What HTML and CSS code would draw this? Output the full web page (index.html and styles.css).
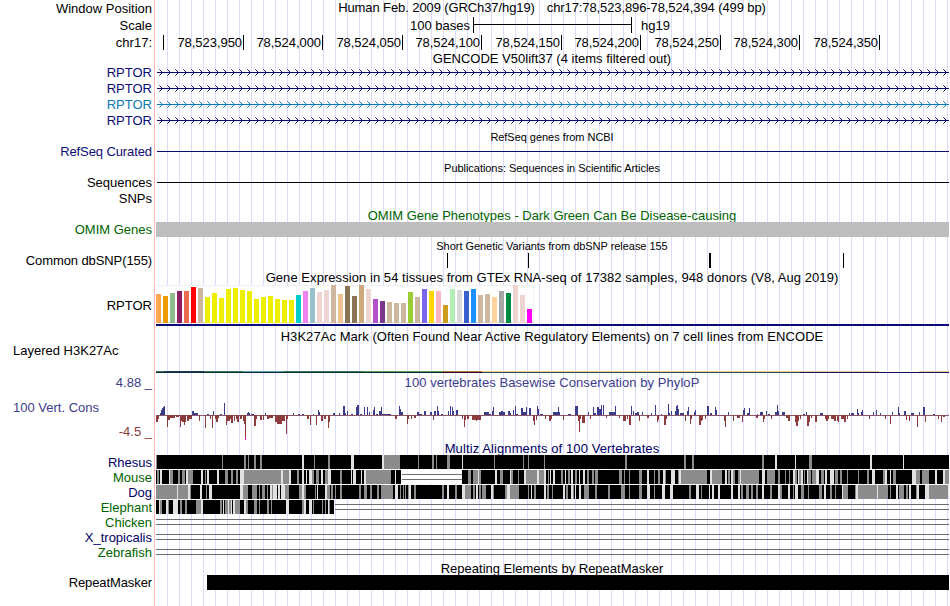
FILE: index.html
```html
<!DOCTYPE html>
<html lang="en">

<head>
  <meta charset="utf-8">
  <title>RPTOR chr17:78,523,896-78,524,394</title>
  <link rel="stylesheet" href="styles.css">
</head>

<body>
  <div class="browser">
    <div class="row h16">
      <span class="label">Window Position</span>
      <span class="title position"><span>Human Feb. 2009 (GRCh37/hg19)</span><span>chr17:78,523,896-78,524,394 (499 bp)</span></span>
    </div>
    <div class="row h17">
      <span class="label down">Scale</span>
      <div class="scale"><span class="down">100 bases</span><i class="scale-bar"></i><span class="down">hg19</span></div>
    </div>
    <div class="row h18">
      <span class="label">chr17:</span>
      <div class="ruler" id="ruler"></div>
    </div>

    <div class="row h13"><span class="title down">GENCODE V50lift37 (4 items filtered out)</span></div>
    <div class="row h16 navy"><span class="label">RPTOR</span><svg class="track gene" height="16"></svg></div>
    <div class="row h16 navy"><span class="label">RPTOR</span><svg class="track gene" height="16"></svg></div>
    <div class="row h16 teal"><span class="label">RPTOR</span><svg class="track gene" height="16"></svg></div>
    <div class="row h16 navy"><span class="label">RPTOR</span><svg class="track gene" height="16"></svg></div>

    <div class="row h16"><span class="title small down">RefSeq genes from NCBI</span></div>
    <div class="row h15 navy"><span class="label tight">RefSeq Curated</span><i class="thin-line"></i></div>
    <div class="row h16"><span class="title small down">Publications: Sequences in Scientific Articles</span></div>
    <div class="row h15"><span class="label">Sequences</span><i class="thin-line"></i></div>
    <div class="row h17"><span class="label">SNPs</span></div>

    <div class="row h15 green"><span class="title down">OMIM Gene Phenotypes - Dark Green Can Be Disease-causing</span></div>
    <div class="row h15 green"><span class="label">OMIM Genes</span><i class="block omim"></i></div>

    <div class="row h16"><span class="title small down">Short Genetic Variants from dbSNP release 155</span></div>
    <div class="row h15"><span class="label tight">Common dbSNP(155)</span><svg class="track" id="snps" height="15"></svg></div>

    <div class="row h17"><span class="title wide down">Gene Expression in 54 tissues from GTEx RNA-seq of 17382 samples, 948 donors (V8, Aug 2019)</span></div>
    <div class="row gtex-row"><span class="label">RPTOR</span><svg class="track" id="gtex" height="41"></svg></div>

    <div class="row h20"><span class="title wide">H3K27Ac Mark (Often Found Near Active Regulatory Elements) on 7 cell lines from ENCODE</span></div>
    <div class="row h3k-row"><span class="label left">Layered H3K27Ac</span><svg class="track" id="h3k" height="29"></svg></div>

    <div class="row cons-row">
      <div class="cons-label blue">
        <span>4.88 _</span>
        <span class="cons-name">100 Vert. Cons</span>
        <span class="red">-4.5 _</span>
      </div>
      <div class="cons-track">
        <span class="title wide blue">100 vertebrates Basewise Conservation by PhyloP</span>
        <svg class="track" id="phylop" height="50"></svg>
      </div>
    </div>

    <div class="row h13 darkblue"><span class="title wider">Multiz Alignments of 100 Vertebrates</span></div>
    <div class="row h15 darkblue"><span class="label">Rhesus</span><svg class="track align" data-species="rhesus" height="15"></svg></div>
    <div class="row h15 green"><span class="label">Mouse</span><svg class="track align" data-species="mouse" height="15"></svg></div>
    <div class="row h15 darkblue"><span class="label">Dog</span><svg class="track align" data-species="dog" height="15"></svg></div>
    <div class="row h15 green"><span class="label">Elephant</span><svg class="track align" data-species="elephant" height="15"></svg></div>
    <div class="row h15 green"><span class="label">Chicken</span><svg class="track align" data-species="chicken" height="15"></svg></div>
    <div class="row h15 darkblue"><span class="label">X_tropicalis</span><svg class="track align" data-species="xenopus" height="15"></svg></div>
    <div class="row h15 green"><span class="label">Zebrafish</span><svg class="track align" data-species="zebrafish" height="15"></svg></div>

    <div class="row h15"><span class="title down">Repeating Elements by RepeatMasker</span></div>
    <div class="row h15"><span class="label tight">RepeatMasker</span><i class="block repeat"></i></div>
  </div>

  <script src="tracks.js"></script>
</body>

</html>
```
FILE: styles.css
```css
body {
  margin: 0;
  background: #fff;
  font-family: "Liberation Sans", Arial, sans-serif;
  font-size: 13px;
  line-height: 15px;
  color: #000;
}

.browser {
  width: 949px;
  height: 606px;
  overflow: hidden;
  background:
    linear-gradient(#ffb4b4, #ffb4b4) 154px 0 / 1px 100% no-repeat,
    repeating-linear-gradient(to right, #dcdcf8 0, #dcdcf8 1px, transparent 1px, transparent 12px) 167px 0 no-repeat;
}

.row {
  display: flex;
  align-items: center;
  white-space: nowrap;
}

.h13 { height: 13px; }
.h15 { height: 15px; }
.h16 { height: 16px; }
.h17 { height: 17px; }
.h18 { height: 18px; }
.h20 { height: 20px; }

.label {
  flex: none;
  box-sizing: border-box;
  width: 155px;
  padding-right: 3px;
  text-align: right;
}

.label.left {
  margin-top: -3px;
  padding-left: 13px;
  text-align: left;
}

.title {
  flex: 1;
  text-align: center;
}

.row > .title:first-child {
  margin-left: 155px;
}

.small {
  font-size: 11px;
  letter-spacing: -0.04px;
}

.down { padding-top: 2px; }
.tight { letter-spacing: -0.1px; }
.wide { letter-spacing: 0.06px; }
.wider { letter-spacing: 0.1px; }

.position {
  display: flex;
  justify-content: center;
  gap: 12px;
  padding-bottom: 2px;
  letter-spacing: -0.1px;
}

.navy { color: #0c0c78; }
.teal { color: #0c78b4; }
.green { color: #006400; }
.blue { color: #3c3c8c; }
.darkblue { color: #000064; }
.red { color: #8c3c3c; }

.scale {
  display: flex;
  align-items: center;
  padding-left: 255px;
}

.scale-bar {
  width: 157px;
  height: 16px;
  margin: 1px 9px 0 3px;
  border-left: 1px solid #000;
  border-right: 1px solid #000;
  background: linear-gradient(#000, #000) 0 7px / 100% 1px no-repeat;
}

.ruler {
  display: flex;
  padding-left: 8px;
}

.ruler span {
  box-sizing: border-box;
  height: 15px;
  padding-right: 1px;
  border-right: 1px solid #000;
  text-align: right;
  letter-spacing: -0.05px;
}

.track {
  flex: none;
  display: block;
  width: 794px;
  shape-rendering: crispEdges;
}

.thin-line {
  flex: 1;
  height: 1px;
  margin-left: 2px;
  background: currentColor;
}

.block {
  flex: 1;
  height: 15px;
  background: #000;
}

.omim {
  margin-left: 1px;
  background: #bebebe;
}

.repeat {
  margin-left: 52px;
}

.gtex-row {
  height: 41px;
}

.h3k-row {
  height: 29px;
  align-items: flex-start;
}

.cons-row {
  height: 67px;
  align-items: flex-start;
}

.cons-label {
  flex: none;
  display: flex;
  flex-direction: column;
  justify-content: space-between;
  box-sizing: border-box;
  width: 155px;
  height: 64px;
  padding-right: 3px;
  text-align: right;
}

.cons-name {
  padding-left: 13px;
  text-align: left;
}

.cons-track {
  display: flex;
  flex-direction: column;
}
```
FILE: tracks.js
```js
const SVG_NS = 'http://www.w3.org/2000/svg';
const LEFT = 155;
const RIGHT = 949;

document.querySelectorAll('.track').forEach(svg => {
  svg.setAttribute('viewBox', `${LEFT} 0 ${RIGHT - LEFT} ${svg.getAttribute('height')}`);
});

function rect(svg, x, y, w, h, fill, opacity = 1) {
  const r = document.createElementNS(SVG_NS, 'rect');
  r.setAttribute('x', x);
  r.setAttribute('y', y);
  r.setAttribute('width', w);
  r.setAttribute('height', h);
  r.setAttribute('fill', fill);
  if (opacity < 1) r.setAttribute('opacity', opacity);
  svg.appendChild(r);
}

// ruler
const ruler = document.getElementById('ruler');
let last = 162;
[163, 243, 322, 402, 481, 561, 640, 720, 799, 879].forEach((x, i) => {
  const tick = document.createElement('span');
  tick.style.width = (i ? x - last : 1) + 'px';
  if (i) tick.textContent = (78523900 + i * 50).toLocaleString('en-US');
  else tick.style.padding = 0;
  ruler.appendChild(tick);
  last = x;
});

// intron lines with strand arrows
document.querySelectorAll('.gene').forEach(svg => {
  rect(svg, 157, 8, 792, 1, 'currentColor');
  for (let tip = 162; tip < RIGHT; tip += 8) {
    for (let k = 1; k <= 3; k++) {
      rect(svg, tip - k, 8 - k, 1, 1, 'currentColor', k === 3 ? 0.6 : 1);
      rect(svg, tip - k, 8 + k, 1, 1, 'currentColor', k === 3 ? 0.6 : 1);
    }
  }
});

// dbSNP
[[447, 1], [528, 1], [709, 2], [843, 1]].forEach(([x, w]) => {
  rect(document.getElementById('snps'), x, 0, w, 15, '#000');
});

// GTEx: bar height, colour
const gtex = document.getElementById('gtex');
const tissues = `29 ffa54f,27 ee9a00,30 8fbc8f,32 8b1c62,32 ee6a50,36 ff0000,35 cdb79e,26 eeee00,30 eeee00,
25 eeee00,34 eeee00,35 eeee00,33 eeee00,32 eeee00,24 eeee00,26 eeee00,27 eeee00,24 eeee00,23 eeee00,23 eeee00,
28 00cdcd,32 ee82ee,35 9ac0cd,31 eed5d2,33 eed5d2,38 cdb79e,29 eec591,37 8b7355,27 8b7355,38 cdaa7d,
34 eed5d2,24 b452cd,22 7a378b,21 cdb79e,20 cdb79e,20 cdb79e,31 9acd32,26 cdb79e,34 7a67ee,32 ffd700,
32 ffb6c1,18 cd9b1d,34 b4eeb4,33 d9d9d9,32 3a5fcd,34 1e90ff,28 cdb79e,29 cdb79e,26 ffd39b,32 a6a6a6,
30 008b45,38 eed5d2,28 eed5d2,14 ff00ff`.split(/,\s*/);
rect(gtex, 156, 0, 378, 38, '#f0f0f0');
rect(gtex, 156, 1, 377, 36, '#fff');
rect(gtex, 156, 37, 378, 1, '#dcdcdc');
tissues.forEach((t, i) => {
  const [h, color] = t.split(' ');
  rect(gtex, 156 + i * 7, 38 - h, 5, h, '#' + color);
});
rect(gtex, 156, 39, 793, 2, '#0c0c78');

// layered H3K27Ac signal
const h3k = document.getElementById('h3k');
[[156, 8, '#2f7f5f'], [164, 40, '#1c3c64'], [204, 39, '#2f7f5f'], [243, 40, '#4fa0b4'], [283, 80, '#2f8058'],
 [363, 79, '#4f9f50'], [442, 40, '#b47846'], [482, 397, '#ebc882'], [879, 40, '#ffffff'], [919, 30, '#ebc882']
].forEach(([x, w, c]) => rect(h3k, x, 25, w, 1, c));
[[156, 286, '#142832'], [442, 40, '#280a1e'], [482, 318, '#325050'], [800, 149, '#141464']
].forEach(([x, w, c]) => rect(h3k, x, 26, w, 1, c));

// phyloP: x, width, signed height
const phylop = document.getElementById('phylop');
const scores = `156 2 -6,158 1 -3,160 1 2,161 1 5,162 1 7,163 1 8,164 1 9,167 1 -11,168 2 -4,170 5 -2,176 3 -1,180 1 -11,
181 1 -5,182 2 -6,184 1 -9,185 1 -6,187 2 -5,189 3 -3,192 2 4,194 4 2,199 1 -5,205 1 -12,207 2 1,210 1 -3,212 1 -12,
213 1 4,215 1 -3,216 2 -6,218 1 -2,220 2 1,224 1 12,226 1 -9,227 3 -5,230 1 -3,231 2 -7,234 1 -5,236 1 -3,237 2 -6,
240 2 -3,243 1 -5,244 1 -8,245 1 -24,247 3 2,248 1 3,251 3 1,254 2 -10,256 1 -3,260 2 -4,263 1 -4,265 1 2,267 2 -3,
269 4 -2,275 2 -6,277 5 -8,282 3 -5,286 1 -18,287 1 -3,293 1 2,298 2 1,302 2 1,307 2 -3,310 1 -9,313 1 1,316 1 -9,
318 1 5,319 1 3,321 2 -5,324 2 -3,328 1 -12,329 1 -6,333 2 2,339 1 2,343 2 9,345 1 2,347 1 4,351 2 1,356 1 8,
357 2 10,360 2 1,364 1 8,367 1 8,369 1 3,373 1 5,374 1 8,376 2 1,379 2 4,381 1 8,382 9 1,395 2 -3,399 1 9,400 1 6,
401 2 3,407 1 -8,408 1 -3,411 1 -3,414 2 -2,417 2 3,419 3 1,424 2 4,430 2 3,433 1 -4,434 2 4,437 1 9,438 1 4,441 2 1,
448 1 4,450 1 9,452 1 8,453 1 4,456 2 5,462 1 -3,464 1 -11,465 1 -4,467 2 -3,472 9 -4,476 1 -5,484 5 3,489 2 1,
492 1 4,493 1 8,499 6 3,501 2 4,508 2 4,510 1 2,513 1 5,515 1 9,516 2 1,521 2 7,523 4 3,526 1 8,529 2 7,533 1 -5,
534 1 -9,536 1 -4,537 1 9,538 1 6,540 3 1,545 1 -3,549 2 -5,551 1 -3,553 7 3,558 1 8,563 1 -4,568 3 1,575 3 9,
578 1 -5,579 1 -16,580 1 -3,582 3 -7,588 1 3,590 1 -3,593 1 8,594 2 2,597 2 8,599 2 6,601 1 10,603 1 10,606 1 -2,
609 6 3,615 1 9,619 1 -2,623 3 -5,627 1 -3,629 2 -9,631 1 9,633 1 4,635 2 2,637 2 3,639 1 -5,642 1 3,647 2 -2,
651 1 2,655 1 10,657 1 -6,658 1 -4,661 1 1,664 2 -9,666 1 -3,668 1 11,669 1 2,671 1 4,675 1 4,676 1 9,677 1 10,
678 1 6,680 4 2,685 1 -5,687 1 4,688 1 8,690 1 -8,691 1 -3,694 1 3,695 1 5,699 2 -9,701 1 -5,702 1 -4,705 1 -3,
707 2 9,710 2 2,715 1 8,716 1 5,724 1 -5,725 1 -11,728 1 3,733 1 -5,737 3 -2,742 1 -6,743 1 5,744 1 7,747 2 2,
749 1 7,756 2 -2,757 1 1,760 3 3,763 1 -6,764 1 -3,766 1 4,768 2 1,771 1 -3,775 2 3,777 1 10,778 1 4,782 3 3,
786 2 -2,788 2 -5,795 1 -6,796 2 -10,798 1 -5,800 1 -3,803 2 1,806 1 3,807 2 -10,809 1 -6,811 1 -2,815 2 -6,
820 3 2,825 4 -3,826 2 -5,831 4 -3,834 2 -5,837 1 -5,838 1 -6,841 3 -3,844 2 -6,847 1 -3,849 1 2,851 3 2,857 1 6,
858 1 2,861 1 3,862 1 5,869 1 -3,873 1 3,876 1 5,880 1 2,885 1 -3,890 1 -8,892 1 3,898 1 8,899 1 2,904 2 4,
906 1 -4,909 1 -5,911 3 2,917 1 -11,919 1 3,923 2 8,925 1 -6,933 2 1,938 1 -3,941 1 -6,943 2 -1`.split(/,\s*/);
rect(phylop, 156, 25, 793, 1, '#8c5a64');
scores.forEach(s => {
  const [x, w, v] = s.split(' ').map(Number);
  if (v > 0) rect(phylop, x, 25 - v, w, v, '#3c3c8c');
  else rect(phylop, x, 25, w, 1 - v, '#8c3c3c');
});
rect(phylop, 245, 48, 1, 2, '#ff00ff');

// alignments: end of aligned part, unaligned gaps, then g(ray) / l(ight) columns over black as x+width
const species = {
  rhesus: { end: 949, cols: `g156+1 g222+1 g244+2 g248+1 g254+2 g260+2 l302+2 g314+1 g328+2 l351+3 l382+2 g384+16 g418+1
    g432+2 g436+1 g447+3 l462+1 g494+1 g523+1 g528+1 g544+1 g625+2 g684+2 g692+2 g762+2 l775+2 l795+1 g809+3 l870+2 l903+1` },
  mouse: { end: 949, gap: [401, 61], cols: `g157+2 l160+2 l169+1 g170+3 g178+2 g182+3 l186+2 g188+5 l201+2 g205+1 l207+2
    l217+2 g225+3 g231+2 g236+2 l240+4 g244+37 l281+2 g283+6 l289+2 g297+2 l302+2 l306+1 l309+3 g312+2 g316+3 l321+2
    g325+3 l328+3 g340+2 l351+1 l353+3 l361+1 l364+2 g366+25 l395+1 g468+3 g473+5 l478+1 g479+2 l495+2 g500+3 l510+1
    g511+2 g518+1 l524+2 g526+11 l537+2 g539+5 l544+2 g548+1 l550+1 l553+2 g561+2 l565+1 g568+2 l571+2 g575+2 l579+1
    l583+2 g587+2 g592+2 g595+3 g619+3 g624+1 g629+1 g639+3 l647+2 g654+1 g658+2 l663+2 g665+1 l671+4 g678+1 l679+2
    g681+26 l710+2 g712+10 l725+2 g728+2 l731+2 g733+2 g738+2 l740+1 g741+18 l762+3 g767+8 g778+2 g785+1 g789+1 l793+2
    g795+2 l798+1 g799+2 l801+2 g804+1 l807+1 g808+3 g812+4 l816+3 g821+3 l825+2 l830+4 g835+3 g840+2 g847+1 g858+1
    g867+2 l872+3 g883+2 l885+2 l890+1 g893+3 l912+4 g916+4 g922+3 g925+4 l935+2 l943+2 g945+4` },
  dog: { end: 949, cols: `g156+21 l177+1 g178+10 l188+2 g190+1 l200+2 g206+1 l209+3 l240+3 g243+5 g252+5 g259+1 g262+3
    g267+1 l270+2 g272+1 l273+4 l278+2 l281+4 g285+4 g299+3 l302+2 g304+2 g315+1 l317+1 l325+2 g327+3 g331+2 g335+1
    g340+2 g359+2 g364+3 g370+2 g377+2 g381+12 l395+3 g400+1 g403+1 g405+1 g408+1 l409+2 g414+2 g442+2 l447+2 g455+2
    l462+3 g465+6 g473+2 l476+2 g479+2 g482+4 l491+2 g493+1 g505+2 l507+3 g510+9 g528+1 l531+1 g534+2 l544+2 g547+2
    g552+1 l563+2 g566+2 l571+2 g573+1 l575+1 l579+2 g584+5 g595+2 g608+2 g621+4 g629+1 g639+3 l647+3 g654+1 l662+3
    l670+3 g689+2 l696+3 g701+1 l709+1 l712+2 l718+2 l731+2 l738+2 g741+2 g746+3 g751+2 g756+2 l762+2 g770+2 l778+2
    g780+2 l788+2 g793+1 l795+3 g801+3 g808+1 g819+3 l824+2 g830+2 g835+1 l842+1 g843+5 g855+1 l856+2 g858+19 l877+1
    g878+10 g890+1 l896+2 g899+5 g906+2 l909+2 g916+1 l917+2 l925+4 g929+19 l948+1` },
  elephant: { end: 334, cols: `l159+1 g160+2 l166+2 g168+1 l173+5 g180+2 g185+2 g196+5 l201+2 g220+2 l223+1 g225+3
    l228+1 g229+2 l231+1 l233+2 g235+5 l244+2 g246+2 g254+3 g259+1 g267+2 g271+1 l286+3 g302+2 l304+2 l309+3 g313+1
    g322+1 g325+1 l328+1 g329+1` },
  chicken: { end: 156 },
  xenopus: { end: 156 },
  zebrafish: { end: 156 }
};

document.querySelectorAll('.align').forEach(svg => {
  const { end, gap, cols } = species[svg.dataset.species];
  if (end > 156) rect(svg, 156, 0, end - 156, 14, '#000');
  (cols ? cols.split(/\s+/) : []).forEach(c => {
    const [x, w] = c.slice(1).split('+');
    rect(svg, x, 0, w, 14, c[0] === 'g' ? '#8c8c8c' : '#e1e1e1');
  });
  if (gap) rect(svg, gap[0], 0, gap[1], 14, '#fff');
  const [from, to] = gap ? [gap[0] + 1, gap[0] + gap[1]] : [end > 156 ? end + 1 : 156, RIGHT];
  if (to > from) {
    rect(svg, from, 4, to - from, 1, '#6e6e6e');
    rect(svg, from, 9, to - from, 1, '#6e6e6e');
  }
});
```
